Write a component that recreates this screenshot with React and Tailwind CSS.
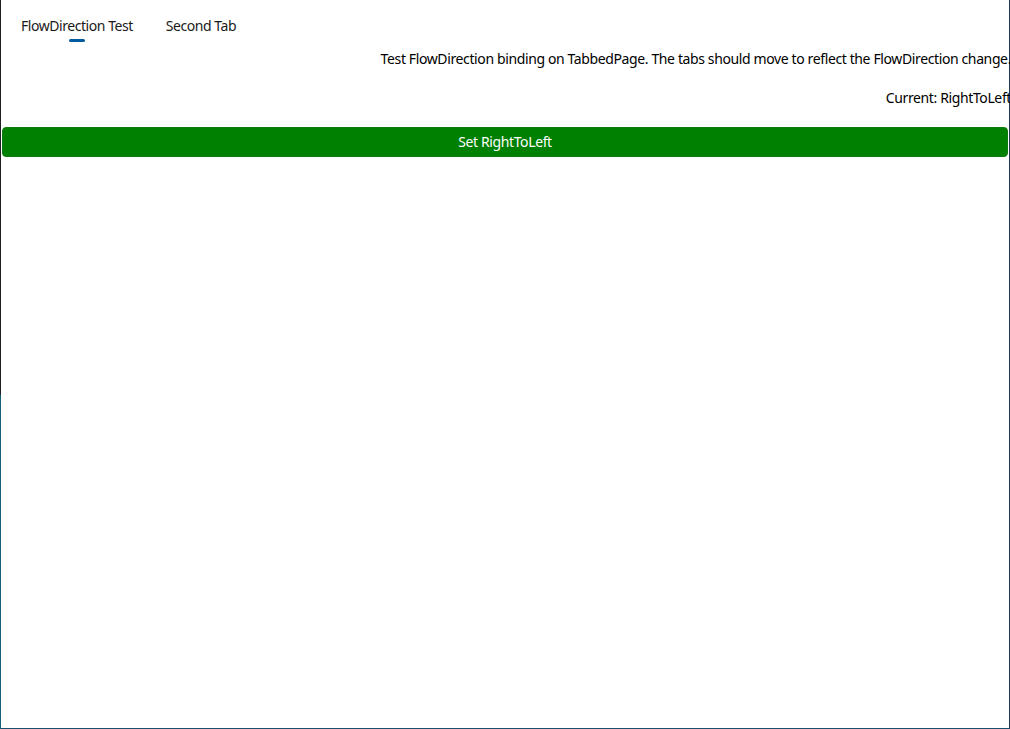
import React from 'react';

const App = () => {
  return (
    <div
      className="w-[1010px] h-[729px] flex bg-white overflow-hidden"
      style={{ fontFamily: '"Noto Sans", "Open Sans", sans-serif' }}
    >
      {/* window edge on the left */}
      <div className="w-px flex flex-col shrink-0">
        <div className="h-[395px] bg-[#202020]"></div>
        <div className="flex-1 bg-[#15607a]"></div>
      </div>

      <div className="flex-1 flex flex-col border-r border-b border-r-[#1c3a5c] border-b-[#1a4f6e] min-w-0">
        <div className="flex items-start h-[48px] pl-[20px] pt-[16px] gap-[33px] text-[14px] text-[#1a1a1a]">
          <div className="flex flex-col items-center">
            <span className="leading-[20px] tracking-[-0.45px]">FlowDirection Test</span>
            <span className="mt-[3px] ml-[1px] w-[16px] h-[3px] rounded-full bg-[#005a9e]"></span>
          </div>
          <span className="leading-[20px] tracking-[-0.45px]">Second Tab</span>
        </div>

        <div className="flex flex-col text-[14px] text-black tracking-[-0.38px]">
          <p className="text-right leading-[22px] whitespace-nowrap -mr-[2px]">
            Test FlowDirection binding on TabbedPage. The tabs should move to reflect the FlowDirection change.
          </p>
          <p className="text-right leading-[22px] mt-[17px] whitespace-nowrap -mr-[2px]">Current: RightToLeft</p>
        </div>

        <div className="px-px mt-[18px]">
          <button className="w-full h-[30px] rounded-[4px] bg-[#008000] border border-[#0f7a0f] text-white text-[14px] tracking-[-0.38px] leading-none">
            Set RightToLeft
          </button>
        </div>
      </div>
    </div>
  );
};

export default App;
